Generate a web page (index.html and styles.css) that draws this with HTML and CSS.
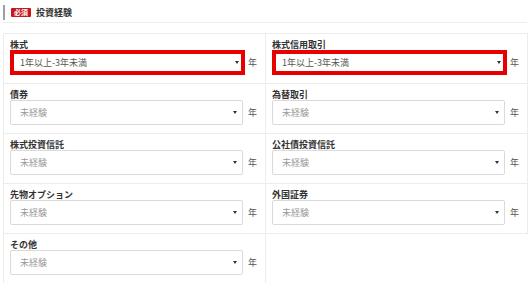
FILE: index.html
```html
<!DOCTYPE HTML>
<html>
  <head>
    <meta http-equiv="Content-type" content="text/html;charset=UTF-8">
    <title>投資経験</title>
    <link rel="stylesheet" href="styles.css">
  </head>
  <body>
    <div class="section">
      <h2 class="section-head">
        <span class="bar"></span>
        <span class="badge">必須</span>
        <span class="title">投資経験</span>
      </h2>
      <div class="grid">
        <div class="cell">
          <label class="label" for="stock">株式</label>
          <div class="row">
            <div class="sel hl"><select id="stock"><option>1年以上-3年未満</option></select></div>
            <span class="unit">年</span>
          </div>
        </div>
        <div class="cell">
          <label class="label" for="margin">株式信用取引</label>
          <div class="row">
            <div class="sel hl"><select id="margin"><option>1年以上-3年未満</option></select></div>
            <span class="unit">年</span>
          </div>
        </div>
        <div class="cell">
          <label class="label" for="bond">債券</label>
          <div class="row">
            <div class="sel empty"><select id="bond"><option>未経験</option></select></div>
            <span class="unit">年</span>
          </div>
        </div>
        <div class="cell">
          <label class="label" for="fx">為替取引</label>
          <div class="row">
            <div class="sel empty"><select id="fx"><option>未経験</option></select></div>
            <span class="unit">年</span>
          </div>
        </div>
        <div class="cell">
          <label class="label" for="fund">株式投資信託</label>
          <div class="row">
            <div class="sel empty"><select id="fund"><option>未経験</option></select></div>
            <span class="unit">年</span>
          </div>
        </div>
        <div class="cell">
          <label class="label" for="pfund">公社債投資信託</label>
          <div class="row">
            <div class="sel empty"><select id="pfund"><option>未経験</option></select></div>
            <span class="unit">年</span>
          </div>
        </div>
        <div class="cell">
          <label class="label" for="future">先物オプション</label>
          <div class="row">
            <div class="sel empty"><select id="future"><option>未経験</option></select></div>
            <span class="unit">年</span>
          </div>
        </div>
        <div class="cell">
          <label class="label" for="foreign">外国証券</label>
          <div class="row">
            <div class="sel empty"><select id="foreign"><option>未経験</option></select></div>
            <span class="unit">年</span>
          </div>
        </div>
        <div class="cell">
          <label class="label" for="other">その他</label>
          <div class="row">
            <div class="sel empty"><select id="other"><option>未経験</option></select></div>
            <span class="unit">年</span>
          </div>
        </div>
      </div>
    </div>
  </body>
</html>
```

FILE: styles.css
```css
html, body {
font-family: "Noto Sans CJK JP", "Noto Sans", sans-serif;
}
body {
margin: 0;
background: #fff;
color: #333;
}
.section {
padding: 4px 3px 0 3px;
}
.section-head {
display: flex;
align-items: center;
height: 17px;
margin: 0;
padding-bottom: 1px;
border-bottom: 1px solid #efefef;
font-size: 9px;
font-weight: bold;
}
.bar {
width: 2px;
height: 15px;
background: #a0a0a0;
margin-right: 6px;
}
.badge {
background: #c8161d;
color: #fff;
font-size: 7px;
line-height: 9px;
padding: 0 3px;
border-radius: 1px;
margin-right: 5px;
}
.title {
color: #333;
}
.grid {
display: grid;
grid-template-columns: 262px 262px;
margin-top: 10px;
}
.cell {
border: 1px solid #ececec;
margin: 0 -1px -1px 0;
padding: 5px 8px 8px 6px;
}
.label {
display: block;
font-size: 9px;
font-weight: bold;
line-height: 11px;
color: #333;
}
.row {
display: flex;
align-items: center;
}
.sel {
position: relative;
flex: 1;
}
.sel select {
display: block;
width: 100%;
height: 25px;
box-sizing: border-box;
appearance: none;
-webkit-appearance: none;
border: 1px solid #dadada;
border-radius: 2px;
background: #fff;
padding: 0 0 0 9px;
font-family: "Noto Sans CJK JP", "Noto Sans", sans-serif;
font-size: 9px;
color: #555;
}
.sel::after {
content: "";
position: absolute;
right: 6px;
top: 11px;
border-left: 2px solid transparent;
border-right: 2px solid transparent;
border-top: 3px solid #333;
}
.sel.empty select {
color: #999;
}
.sel.hl select {
border: 4px solid #e60000;
border-radius: 0;
padding-left: 6px;
margin-right: -2px;
width: calc(100% + 2px);
}
.sel.hl::after {
right: 4px;
}
.unit {
font-size: 9px;
color: #555;
margin-left: 5px;
width: 9px;
}
```
